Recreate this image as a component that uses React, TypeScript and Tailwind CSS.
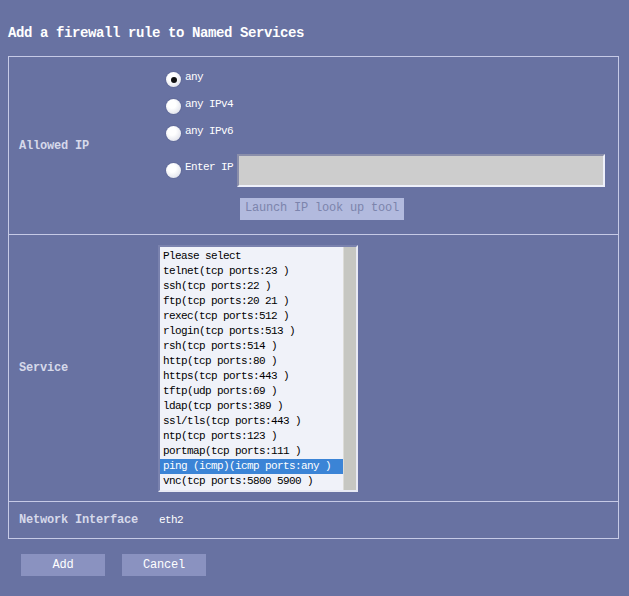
import React from 'react'

const services = [
  'Please select',
  'telnet(tcp ports:23 )',
  'ssh(tcp ports:22 )',
  'ftp(tcp ports:20 21 )',
  'rexec(tcp ports:512 )',
  'rlogin(tcp ports:513 )',
  'rsh(tcp ports:514 )',
  'http(tcp ports:80 )',
  'https(tcp ports:443 )',
  'tftp(udp ports:69 )',
  'ldap(tcp ports:389 )',
  'ssl/tls(tcp ports:443 )',
  'ntp(tcp ports:123 )',
  'portmap(tcp ports:111 )',
  'ping (icmp)(icmp ports:any )',
  'vnc(tcp ports:5800 5900 )',
]

const SELECTED = 'ping (icmp)(icmp ports:any )'

function Radio({ checked }: { checked?: boolean }) {
  return (
    <span className="flex h-[15px] w-[15px] shrink-0 items-center justify-center rounded-full bg-[radial-gradient(circle_at_40%_35%,#ffffff_30%,#d4d6e2_100%)] shadow-[0_0_0_1px_rgba(90,96,140,0.35)]">
      {checked && <span className="h-[6px] w-[6px] rounded-full bg-[#111]" />}
    </span>
  )
}

function RadioRow({ label, checked }: { label: string; checked?: boolean }) {
  return (
    <div className="flex items-center">
      <Radio checked={checked} />
      <span className="ml-[4px] -mt-[4px] whitespace-pre text-[11px] tracking-[-0.6px] text-white">{label}</span>
    </div>
  )
}

function RowLabel({ children }: { children: React.ReactNode }) {
  return (
    <div className="w-[149px] shrink-0 pl-[10px] text-[12px] font-bold tracking-[-0.2px] text-[#d6d9ea]">
      {children}
    </div>
  )
}

export default function App() {
  return (
    <div className="min-h-[596px] w-[629px] bg-[#6872a2] font-['Liberation_Mono',monospace]">
      <div className="pl-[8px] pt-[25px] text-[14px] font-bold leading-[16px] tracking-[-0.4px] text-white">
        Add a firewall rule to Named Services
      </div>

      <div className="ml-[8px] mt-[15px] w-[611px] border border-[#c6cae6]">
        {/* Allowed IP */}
        <div className="flex h-[177px] items-center">
          <RowLabel>Allowed IP</RowLabel>
          <div className="flex flex-col pl-[8px] pt-[1px]">
            <div className="flex flex-col gap-[12px]">
              <RadioRow label="any" checked />
              <RadioRow label="any IPv4" />
              <RadioRow label="any IPv6" />
            </div>
            <div className="mt-[13px] flex items-center">
              <Radio />
              <span className="ml-[4px] -mt-[6px] whitespace-pre text-[11px] tracking-[-0.6px] text-white">Enter IP</span>
              <div className="ml-[4px] h-[33px] w-[368px] border-2 border-b-[#eef0fa] border-l-[#8a8eaa] border-r-[#eef0fa] border-t-[#8a8eaa] bg-[#cdcdcd]" />
            </div>
            <div className="mt-[8px] pl-[74px]">
              <button className="h-[22px] w-[164px] bg-[#b2bade] pb-[2px] text-[12px] tracking-[-0.2px] text-[#7c84ac]">
                Launch IP look up tool
              </button>
            </div>
          </div>
        </div>

        {/* Service */}
        <div className="flex h-[267px] items-center border-t border-[#c6cae6]">
          <RowLabel>Service</RowLabel>
          <div className="flex h-[247px] w-[200px] border-2 border-b-[#e8eaf4] border-l-[#7a82ae] border-r-[#e8eaf4] border-t-[#7a82ae] bg-[#f0f2f9]">
            <div className="flex flex-1 flex-col pt-[2px]">
              {services.map(s => (
                <div
                  key={s}
                  className={
                    s === SELECTED
                      ? 'h-[15px] whitespace-pre bg-[#3b84d6] pl-[3px] text-[11px] leading-[15px] tracking-[-0.6px] text-white'
                      : 'h-[15px] whitespace-pre pl-[3px] text-[11px] leading-[15px] tracking-[-0.6px] text-black'
                  }
                >
                  {s}
                </div>
              ))}
            </div>
            <div className="w-[13px] border-l border-[#dcdcd8] bg-[#c6c7c2]" />
          </div>
        </div>

        {/* Network Interface */}
        <div className="flex h-[37px] items-center border-t border-[#c6cae6]">
          <RowLabel>Network Interface</RowLabel>
          <span className="pl-[1px] text-[11px] tracking-[-0.6px] text-white">eth2</span>
        </div>
      </div>

      <div className="flex gap-[17px] pl-[21px] pt-[15px]">
        <button className="h-[22px] w-[84px] bg-[#8a92c0] text-[12px] tracking-[-0.2px] text-white">Add</button>
        <button className="h-[22px] w-[84px] bg-[#8a92c0] text-[12px] tracking-[-0.2px] text-white">Cancel</button>
      </div>
    </div>
  )
}
